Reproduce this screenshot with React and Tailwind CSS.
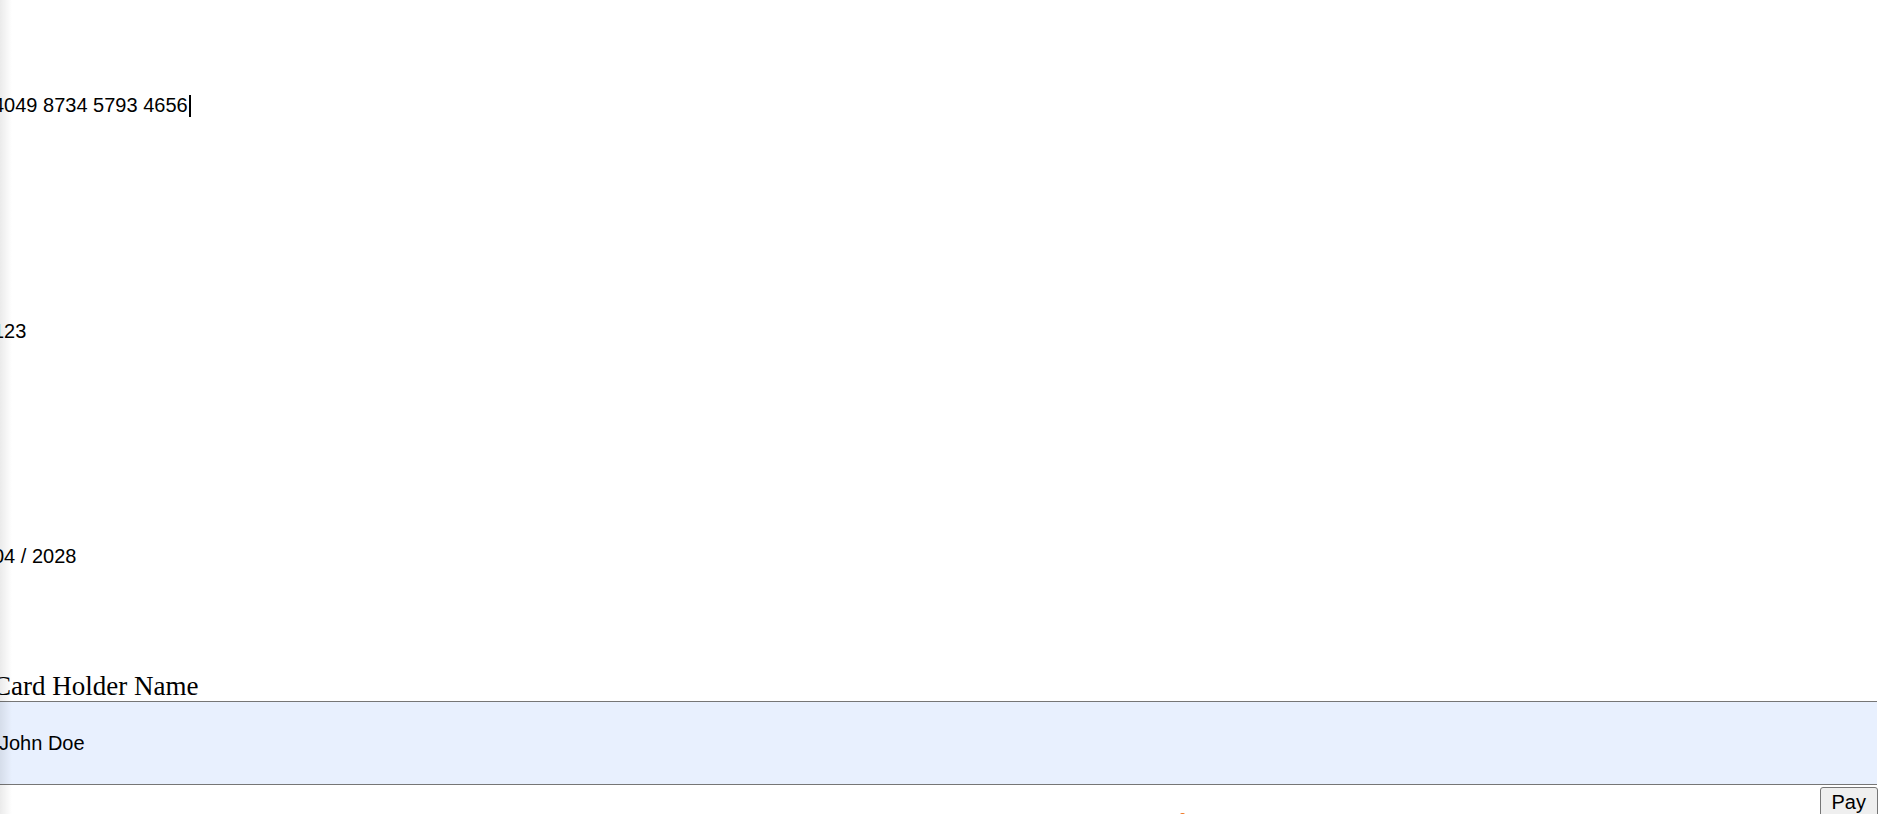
export default function App() {
  const sans = { fontFamily: '"Liberation Sans", Arial, sans-serif' }
  return (
    <div className="relative h-[814px] w-full overflow-hidden bg-white text-black">
      {/* page is scrolled a few px to the right */}
      <div className="-ml-[7px] flex w-[1884px] flex-col" style={sans}>
        <div className="flex h-[225px] items-start pt-[94px]">
          <span className="text-[20px] leading-[23px]">4049 8734 5793 4656</span>
          <span className="ml-[1px] mt-[1px] h-[22px] w-[2px] bg-black" />
        </div>
        <div className="h-[225px] pt-[95px] text-[20px] leading-[23px]">123</div>
        <div className="h-[220px] pt-[95px] text-[20px] leading-[23px]">04 / 2028</div>

        <label
          className="block pt-[1px] text-[27px] leading-[30px]"
          style={{ fontFamily: '"Liberation Serif", "Times New Roman", serif' }}
        >
          Card Holder Name
        </label>
        <div className="flex h-[84px] items-center border-y border-[#767676] bg-[#e8f0fe] pl-[6px] text-[20px] leading-[23px]">
          John Doe
        </div>

        <div className="flex items-start">
          <span className="ml-[1187px] mt-[28px] h-[2px] w-[5px] rounded-t-full bg-[#f07b2a]" />
          <button className="ml-auto mr-[-1px] mt-[2px] rounded-[3px] border border-[#767676] bg-[#efefef] px-[11px] py-[3px] text-[20px] leading-[23px]">
            Pay
          </button>
        </div>
      </div>
      <div className="pointer-events-none absolute inset-y-0 left-0 w-[12px] bg-linear-to-r from-black/[0.08] to-transparent" />
    </div>
  )
}
